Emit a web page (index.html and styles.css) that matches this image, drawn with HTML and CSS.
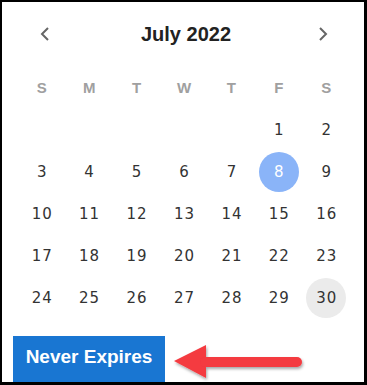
FILE: index.html
```html
<!DOCTYPE html>
<html>
<head>
<meta charset="utf-8">
<link rel="stylesheet" href="styles.css">
</head>
<body>
<div class="frame">
  <div class="header">
    <span class="nav">
      <svg width="14" height="16" viewBox="0 0 14 16"><path d="M10 2 L4 8 L10 14" fill="none" stroke="#666" stroke-width="2"/></svg>
    </span>
    <span class="title">July 2022</span>
    <span class="nav">
      <svg width="14" height="16" viewBox="0 0 14 16"><path d="M4 2 L10 8 L4 14" fill="none" stroke="#666" stroke-width="2"/></svg>
    </span>
  </div>
  <div class="grid weekdays">
    <span>S</span><span>M</span><span>T</span><span>W</span><span>T</span><span>F</span><span>S</span>
  </div>
  <div class="grid days">
    <span></span><span></span><span></span><span></span><span></span><span class="d">1</span><span class="d">2</span>
    <span class="d">3</span><span class="d">4</span><span class="d">5</span><span class="d">6</span><span class="d">7</span><span class="d sel">8</span><span class="d">9</span>
    <span class="d">10</span><span class="d">11</span><span class="d">12</span><span class="d">13</span><span class="d">14</span><span class="d">15</span><span class="d">16</span>
    <span class="d">17</span><span class="d">18</span><span class="d">19</span><span class="d">20</span><span class="d">21</span><span class="d">22</span><span class="d">23</span>
    <span class="d">24</span><span class="d">25</span><span class="d">26</span><span class="d">27</span><span class="d">28</span><span class="d">29</span><span class="d today">30</span>
  </div>
  <div class="footer">
    <button class="never">Never Expires</button>
  </div>
  <svg class="arrow" width="140" height="44" viewBox="0 0 140 44">
    <defs>
      <filter id="sh" x="-10%" y="-20%" width="130%" height="160%">
        <feDropShadow dx="1" dy="2" stdDeviation="1.5" flood-color="#000" flood-opacity="0.35"/>
      </filter>
    </defs>
    <g filter="url(#sh)" fill="#f43a40">
      <polygon points="4,20 36,4 36,37"/>
      <rect x="30" y="16" width="102" height="10" rx="5"/>
    </g>
  </svg>
</div>
</body>
</html>
```
FILE: styles.css
```css
html, body {
  margin: 0;
  padding: 0;
  background: #fff;
}
.frame {
  position: relative;
  width: 362px;
  height: 380px;
  border-style: solid;
  border-color: #000;
  border-width: 2px 3px 3px 2px;
  overflow: hidden;
  background: #fff;
}
.header {
  height: 64px;
  display: flex;
  align-items: center;
  justify-content: space-between;
  padding: 0 34px 0 36px;
}
.nav {
  display: flex;
  width: 14px;
  height: 16px;
}
.title {
  font-family: "Liberation Sans", Arial, sans-serif;
  font-weight: bold;
  font-size: 20px;
  color: #222;
  margin-left: 4px;
}
.grid {
  display: grid;
  grid-template-columns: repeat(7, 1fr);
  padding: 0 14px 0 16px;
}
.weekdays {
  height: 43px;
  align-items: center;
  justify-items: center;
  font-family: "Liberation Sans", Arial, sans-serif;
  font-weight: bold;
  font-size: 15px;
  color: #a0a0a0;
}
.days {
  grid-auto-rows: 42px;
  align-items: center;
  justify-items: center;
}
.d {
  width: 40px;
  height: 40px;
  border-radius: 50%;
  display: flex;
  align-items: center;
  justify-content: center;
  font-family: "DejaVu Sans", Verdana, sans-serif;
  font-size: 15px;
  letter-spacing: 1px;
  text-indent: 1px;
  color: #333;
}
.d.sel {
  background: #8ab4f8;
  color: #fff;
}
.d.today {
  background: #ebebeb;
}
.footer {
  padding: 17px 0 0 11px;
}
.never {
  display: block;
  width: 152px;
  height: 46px;
  border: 0;
  margin: 0;
  padding: 0 0 4px 0;
  background: #1976d2;
  color: #fff;
  font-family: "Liberation Sans", Arial, sans-serif;
  font-weight: bold;
  font-size: 19px;
  text-align: center;
}
.arrow {
  position: absolute;
  left: 168px;
  top: 339px;
}
```
